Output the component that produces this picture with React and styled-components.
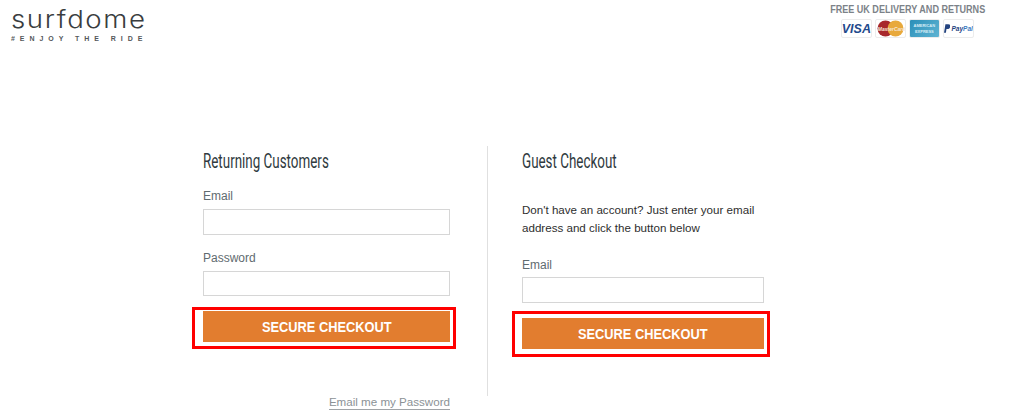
import React from "react";
import styled, { createGlobalStyle } from "styled-components";

const GlobalStyle = createGlobalStyle`
  html, body {
    margin: 0;
    padding: 0;
    background: #fff;
    overflow: hidden;
  }
  body {
    font-family: "Liberation Sans", Arial, sans-serif;
  }
  * {
    box-sizing: border-box;
  }
`;

const Page = styled.div`
  width: 1024px;
  height: 420px;
`;

// Header
const Header = styled.header`
  display: flex;
  justify-content: space-between;
  align-items: flex-start;
  height: 146px;
  padding: 0 31px 0 11px;
`;
const Logo = styled.div`
  display: flex;
  flex-direction: column;
  width: 136px;
  color: #3a3d40;
`;
const LogoName = styled.div`
  font-family: "Inter", sans-serif;
  font-weight: 300;
  font-size: 24px;
  line-height: 24px;
  margin-top: 8px;
  letter-spacing: 1.4px;
  white-space: nowrap;
  transform: scaleX(1.15);
  transform-origin: left center;
`;
const LogoTag = styled.div`
  font-weight: 700;
  font-size: 7px;
  line-height: 8px;
  margin-top: 3px;
  letter-spacing: 4.95px;
  color: #55585b;
  white-space: nowrap;
`;
const Delivery = styled.div`
  display: flex;
  flex-direction: column;
  align-items: center;
  padding-top: 5px;
`;
const DeliveryText = styled.div`
  font-weight: 700;
  font-size: 10px;
  line-height: 10px;
  color: #7c8288;
  white-space: nowrap;
  transform: scaleX(0.905);
`;
const Cards = styled.div`
  display: flex;
  gap: 3px;
  margin-top: 4px;
`;
const Card = styled.div`
  position: relative;
  overflow: hidden;
  display: flex;
  align-items: center;
  justify-content: center;
  width: 31px;
  height: 19px;
  background: ${(p) => p.$bg || "#fff"};
  border: 1px solid #ececec;
  border-radius: 2px;
`;
const VisaText = styled.span`
  font-weight: 700;
  font-style: italic;
  font-size: 12.5px;
  color: #1f4a8c;
`;
const AmexText = styled.span`
  font-weight: 700;
  font-size: 4px;
  line-height: 6px;
  color: #d9eef6;
  text-align: center;
  white-space: nowrap;
`;
const PayPalText = styled.span`
  font-weight: 700;
  font-style: italic;
  font-size: 6.5px;
  color: #3b7bbf;
  white-space: nowrap;
  b {
    color: #24437f;
  }
`;
const McText = styled.span`
  position: absolute;
  left: 2px;
  top: 6px;
  font-weight: 700;
  font-style: italic;
  font-size: 5px;
  color: #f6e7d8;
  white-space: nowrap;
`;

// Checkout panels
const Main = styled.main`
  display: grid;
  grid-template-columns: 284px 35px 242px;
  padding-left: 203px;
`;
const Column = styled.section`
  display: flex;
  flex-direction: column;
  width: ${(p) => p.$width || "auto"};
`;
const Divider = styled.div`
  width: 1px;
  height: 250px;
  background: #e0e0e0;
`;
const Title = styled.h2`
  margin: 3px 0 0;
  height: 25px;
  font-family: "Roboto", sans-serif;
  font-weight: 400;
  font-size: 20px;
  line-height: 24px;
  color: #2f3a40;
  white-space: nowrap;
  transform: scaleX(0.67);
  transform-origin: left center;
`;
const Intro = styled.p`
  margin: 27px 0 0;
  font-size: 11.6px;
  line-height: 18px;
  color: #2e2e2e;
  white-space: nowrap;
`;
const Label = styled.label`
  display: block;
  margin-top: ${(p) => p.$top}px;
  font-size: 12px;
  line-height: 14px;
  color: #5f6b70;
`;
const Input = styled.input`
  display: block;
  width: 100%;
  height: ${(p) => p.$h || 26}px;
  margin-top: ${(p) => p.$gap || 6}px;
  border: 1px solid #d6d6d6;
  background: #fff;
  outline: none;
`;
const Highlight = styled.div`
  margin: ${(p) => p.$top}px -6px 0 -${(p) => p.$left}px;
  padding: ${(p) => p.$pt}px 3px ${(p) => p.$pb}px ${(p) => p.$left - 3}px;
  border: 3px solid #ff0000;
`;
const Button = styled.button`
  display: block;
  width: 100%;
  height: 31px;
  border: 0;
  padding: 0;
  background: #e27d2f;
  color: #fff;
  font-family: "Liberation Sans", sans-serif;
  font-weight: 700;
  font-size: 14px;
`;
const ButtonLabel = styled.span`
  display: inline-block;
  transform: scaleX(0.915);
`;
const ForgotRow = styled.div`
  display: flex;
  justify-content: flex-end;
  margin-top: 46px;
`;
const Forgot = styled.a`
  font-size: 11.6px;
  line-height: 13px;
  color: #8b9296;
  border-bottom: 1px solid #a0a4a7;
  padding-bottom: 1px;
`;

const MasterCard = () => (
  <Card>
    <svg width="29" height="17" viewBox="0 0 29 17">
      <circle cx="9.5" cy="8.5" r="8" fill="#a8282c" />
      <circle cx="19.5" cy="8.5" r="8" fill="#e8a93c" />
    </svg>
    <McText>MasterCard</McText>
  </Card>
);

const PayPalMark = () => (
  <svg width="7" height="9" viewBox="0 0 7 9" style={{ marginRight: 1 }}>
    <path d="M1.500 0h3C6.200 0 7 1 6.600 2.600 6.200 4.300 5 5 3.500 5H2.600L2 9H0z" fill="#24437f" />
  </svg>
);

const App = () => (
  <Page>
    <GlobalStyle />
    <Header>
      <Logo>
        <LogoName>surfdome</LogoName>
        <LogoTag>#ENJOY THE RIDE</LogoTag>
      </Logo>
      <Delivery>
        <DeliveryText>FREE UK DELIVERY AND RETURNS</DeliveryText>
        <Cards>
          <Card>
            <VisaText>VISA</VisaText>
          </Card>
          <MasterCard />
          <Card $bg="linear-gradient(135deg, #2a8fb8, #5fb4d3)">
            <AmexText>
              AMERICAN
              <br />
              EXPRESS
            </AmexText>
          </Card>
          <Card>
            <PayPalMark />
            <PayPalText>
              <b>Pay</b>Pal
            </PayPalText>
          </Card>
        </Cards>
      </Delivery>
    </Header>
    <Main>
      <Column $width="247px">
        <Title>Returning Customers</Title>
        <Label $top={15}>Email</Label>
        <Input type="text" />
        <Label $top={16}>Password</Label>
        <Input type="password" $h={25} />
        <Highlight $top={11} $left={11} $pt={1} $pb={4}>
          <Button>
            <ButtonLabel>SECURE CHECKOUT</ButtonLabel>
          </Button>
        </Highlight>
        <ForgotRow>
          <Forgot>Email me my Password</Forgot>
        </ForgotRow>
      </Column>
      <Divider />
      <Column>
        <Title>Guest Checkout</Title>
        <Intro>
          Don't have an account? Just enter your email
          <br />
          address and click the button below
        </Intro>
        <Label $top={21}>Email</Label>
        <Input type="text" $gap={5} />
        <Highlight $top={8} $left={10} $pt={4} $pb={5}>
          <Button>
            <ButtonLabel>SECURE CHECKOUT</ButtonLabel>
          </Button>
        </Highlight>
      </Column>
    </Main>
  </Page>
);

export default App;
